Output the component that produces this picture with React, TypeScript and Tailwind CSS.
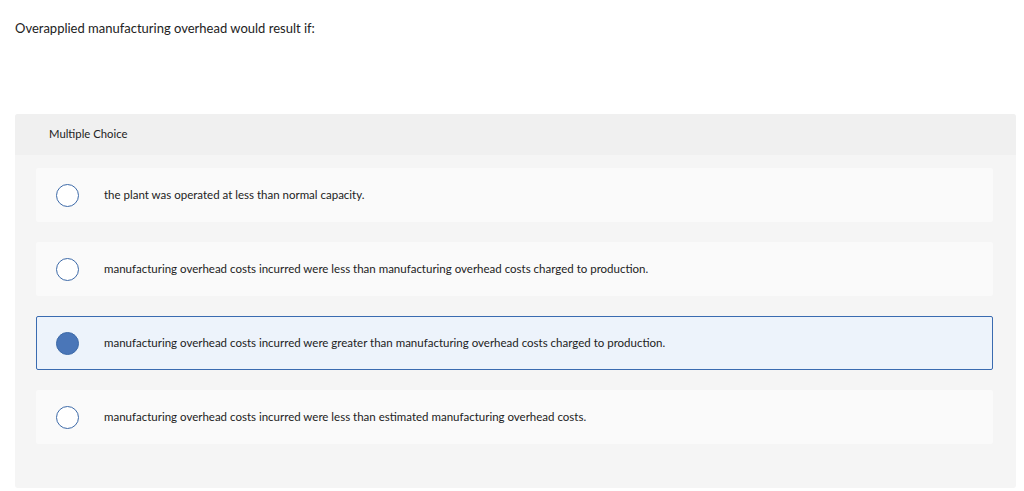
const options = [
  "the plant was operated at less than normal capacity.",
  "manufacturing overhead costs incurred were less than manufacturing overhead costs charged to production.",
  "manufacturing overhead costs incurred were greater than manufacturing overhead costs charged to production.",
  "manufacturing overhead costs incurred were less than estimated manufacturing overhead costs.",
];

export default function App() {
  const selected = 2;
  return (
    <div className="h-[491px] overflow-hidden bg-white pl-[15px] pr-[8px] font-['Lato',sans-serif] text-[#222]">
      <p className="pt-[20px] text-[13px] leading-[16px]">Overapplied manufacturing overhead would result if:</p>
      <div className="mt-[78px] rounded-[3px] bg-[#f5f5f5] pb-[44px]">
        <div className="flex h-[41px] items-center rounded-t-[3px] bg-[#f0f0f0] pl-[34px] text-[11.3px]">Multiple Choice</div>
        <div className="flex flex-col gap-[20px] pl-[21px] pr-[23px] pt-[13px]">
          {options.map((o, i) => {
            const on = i === selected;
            return (
              <div
                key={i}
                className={
                  on
                    ? "flex h-[54px] items-center rounded-[2px] border border-[#3a6bb0] bg-[#edf3fb] pl-[19px]"
                    : "flex h-[54px] items-center rounded-[2px] border border-transparent bg-[#fafafa] pl-[19px]"
                }
              >
                <span
                  className={
                    on
                      ? "h-[23px] w-[23px] shrink-0 rounded-full border border-[#3d6aa8] bg-[#4a76b8]"
                      : "h-[23px] w-[23px] shrink-0 rounded-full border-[1.5px] border-[#3d6aa8] bg-white"
                  }
                />
                <span className="ml-[25px] text-[11.5px] leading-[14px]">{o}</span>
              </div>
            );
          })}
        </div>
      </div>
    </div>
  );
}
